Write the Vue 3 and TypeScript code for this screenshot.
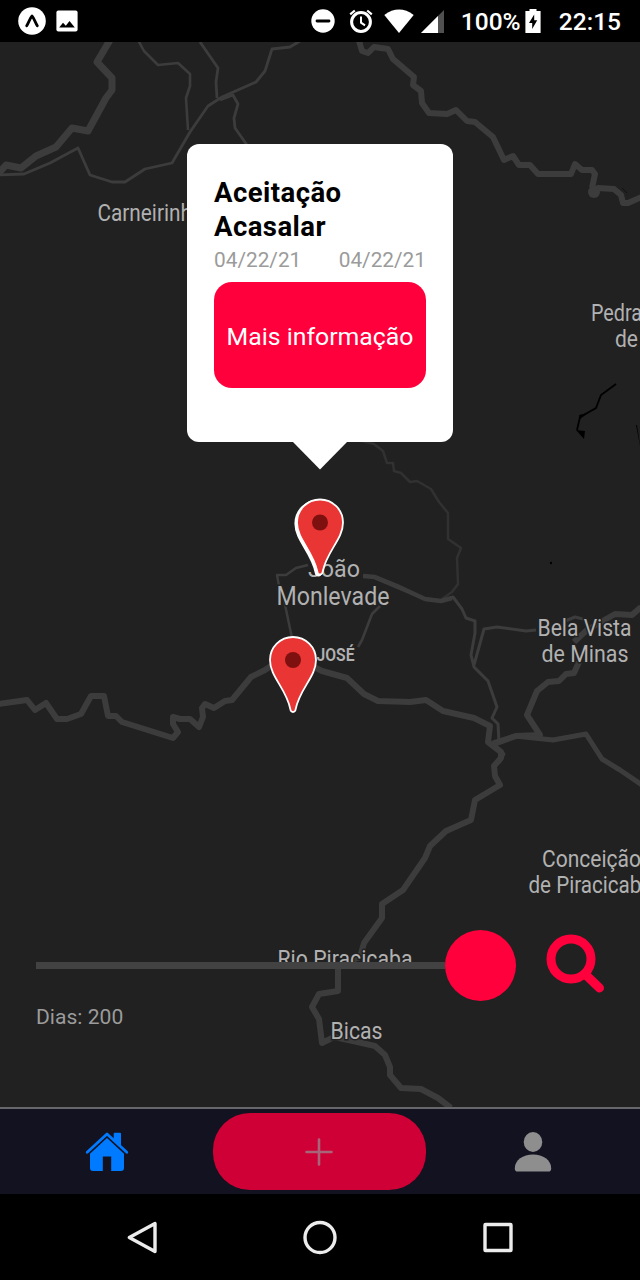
<script setup lang="ts">
interface Road { d: string; w: number; c?: string }
interface MapLabel { text: string; x: number; y: number; width?: number; size: number; weight?: number }
interface Pin { x: number; y: number; double: boolean }

const roads: Road[] = [
  { w: 7, d: 'M110 40 L97 62 L112 78 L112 90 L106 98 L88 131 L72 128 L56 147 L36 156 L21 168 L6 165 L-2 174' },
  { w: 2.8, d: 'M-2 175 L24 174 L50 163 L78 148 L90 175 L112 182 L125 182 L145 169 L172 163 L190 132 L208 106 L222 97 L256 82 L265 71 L272 49 L290 47 L300 41' },
  { w: 2.6, d: 'M138 40 L144 51 L158 65 L178 63 L190 74 L190 86 L186 98 L188 130' },
  { w: 2.8, d: 'M200 42 L218 68 L216 82 L217 98 M220 100 L233 95 L238 104 L234 118 L235 128 L247 145' },
  { w: 6, d: 'M359 41 L362 51 L368 53 L374 47 L388 49 L393 59 L414 77 L413 85 L421 91 L422 103 L429 113 L447 114 L456 110 L467 121 L475 122 L493 137 L504 160 L513 156 L519 165 L530 165 L538 174 L571 174 L575 164 L582 170 L592 170 L595 174 L592 188 M592 192 L598 188 L614 189 L621 195 L623 203 L628 203 L642 197' },
  { w: 2.5, c: '#303130', d: 'M350 438 L374 444 L383 451 L387 463 L393 463 L394 471 L401 473 L410 482 L417 481 L431 489 L439 502 L448 513 L448 539 L461 548 L457 558 L458 584 L452 592 L442 599' },
  { w: 2.5, d: 'M308 565 L296 568 L286 575 L277 575 L279 586 L284 600 L292 638' },
  { w: 2.6, d: 'M380 606 L372 614 L362 640 L358 647' },
  { w: 4.5, d: 'M363 576 L375 577 L397 586 L425 599 L441 601 L452 598' },
  { w: 3, d: 'M375 578 L425 599 M448 599 L453 597 L462 609 L466 618 L475 621 L475 633 L471 655 L474 667 L488 681 L497 707 L492 718 L498 724 L499 742 M474 665 L484 629 L497 627 L526 631 L536 630 M565 621 L575 617 L583 619' },
  { w: 6, d: 'M-2 704 L27 700 L35 710 L46 703 L57 719 L67 719 L81 714 L91 696 L104 696 L108 716 L116 716 L122 722 L173 738 L178 732 L173 724 L173 717 L180 719 L190 719 L199 727 L203 717 L202 708 L205 704 L214 708 L225 701 L232 700 L251 677 L265 670 L280 660' },
  { w: 6, d: 'M310 665 L322 671 L347 678 L364 694 L378 701 L410 702 L426 700 L443 711 L474 718 L490 726 L488 742 L501 752 L501 758 L494 766 L495 776 L500 785 L475 800 L471 820 L446 831 L430 846 L425 858 L403 890 L382 904 L382 918 L364 943 L360 957 L338 966 L338 991 L319 994 L312 1007 L319 1019 L322 1043 L334 1037 L353 1041 L375 1046 L385 1055 L390 1067 L390 1075 L401 1088 L421 1089 L438 1098 L451 1108' },
  { w: 6, d: 'M494 744 L516 736 L540 735 L527 715 L537 691 L548 682 L559 681 L566 674 L574 673 L579 662 M574 642 L587 630 L615 614 L632 615 L641 607' },
  { w: 5, d: 'M493 743 L515 736 L553 740 L586 734 L602 759 L620 770 L642 785' },
  { w: 3, d: 'M492 742 L504 754 L499 763' },
]

const labels: MapLabel[] = [
  { text: 'Carneirinhos', x: 97.5, y: 221, size: 24, width: 117 },
  { text: 'Pedra', x: 591, y: 321, size: 24, width: 51 },
  { text: 'de', x: 615, y: 347, size: 24, width: 23 },
  { text: 'João', x: 308, y: 577, size: 24, width: 52 },
  { text: 'Monlevade', x: 276.5, y: 605, size: 25, width: 113 },
  { text: 'JOSÉ', x: 316.5, y: 661, size: 18, width: 38, weight: 600 },
  { text: 'Bela Vista', x: 537.5, y: 636, size: 24, width: 94 },
  { text: 'de Minas', x: 541.5, y: 662, size: 24, width: 87 },
  { text: 'Conceição', x: 542, y: 867, size: 24, width: 99 },
  { text: 'de Piracicaba', x: 528.5, y: 893, size: 24, width: 124 },
  { text: 'Rio Piracicaba', x: 277.5, y: 967, size: 24, width: 135 },
  { text: 'Bicas', x: 330.5, y: 1039, size: 24, width: 52 },
]

const pins: Pin[] = [
  { x: 320, y: 522.5, double: true },
  { x: 293, y: 660, double: false },
]
const pinPath = 'M0 -23 A23 23 0 0 1 23 0 C23 17 7 28 2.7 49 C2.2 53 -2.2 53 -2.7 49 C-7 28 -23 17 -23 0 A23 23 0 0 1 0 -23 Z'
const dates = ['04/22/21', '04/22/21']
const dias = 200
</script>

<template>
  <main class="phone">
    <header class="status">
      <div class="notices">
        <svg width="28" height="28" viewBox="0 0 28 28"><circle cx="14" cy="14" r="13.8" fill="#fff" /><path d="M8.7 18.8 C10.5 16 12 11 14 9 C16 11 17.5 16 19.3 18.8" fill="none" stroke="#000" stroke-width="2.8" stroke-linecap="round" stroke-linejoin="round" /></svg>
        <svg width="22" height="22" viewBox="0 0 22 22"><rect x=".4" y=".4" width="21.2" height="21" rx="2" fill="#fff" /><path d="M3.2 17.6 L7 12.7 L9.8 15.8 L13.5 11 L18.8 17.6 Z" fill="#000" /></svg>
      </div>
      <div class="system">
        <svg class="dnd" width="24" height="24" viewBox="0 0 24 24"><circle cx="12" cy="12" r="11.7" fill="#fff" /><path d="M6 12 H18" stroke="#000" stroke-width="2.8" stroke-linecap="round" /></svg>
        <svg class="alarm" width="24" height="24" viewBox="0 0 24 24"><circle cx="12" cy="13" r="9.4" fill="none" stroke="#fff" stroke-width="3" /><path d="M12 7.5 V13.6 L16 16.3" fill="none" stroke="#fff" stroke-width="2" /><path d="M1.2 5.4 L5.8 1.5 M22.8 5.4 L18.2 1.5" stroke="#fff" stroke-width="2.2" /></svg>
        <svg class="wifi" width="30" height="24" viewBox="0 0 30 24"><path d="M.3 6 Q15 -4.8 29.7 6 L15 24 Z" fill="#fff" /></svg>
        <svg class="signal" width="23" height="23" viewBox="0 0 23 23"><path d="M23 0 V23 H0 Z" fill="#505050" /><path d="M17 6 V23 H0 Z" fill="#fff" /></svg>
        <span class="percent">100%</span>
        <svg class="battery" width="16" height="24" viewBox="0 0 16 24"><path d="M4.5 0 H11.5 V2 H15.6 V24 H.4 V2 H4.5 Z" fill="#fff" /><path d="M9.2 5.5 L4 14 H7.2 V20 L12.2 11.3 H9.2 Z" fill="#000" /></svg>
        <span>22:15</span>
      </div>
    </header>

    <section class="map">
      <svg class="canvas" viewBox="0 42 640 1065" width="640" height="1065">
        <path v-for="(road, i) in roads" :key="i" :d="road.d" :stroke-width="road.w" :stroke="road.c ?? '#3b3c3b'" fill="none" stroke-linejoin="round" />
        <circle cx="594" cy="192" r="6" fill="#3b3c3b" />
        <path d="M616 384 L601 395 L596 408 L580 417 L577 430" fill="none" stroke="#000" stroke-width="1.8" />
        <path d="M579 415 L588 413 L580 419 Z M576 430 L585 431 L584 439 Z M636 425 L637 425 L641 451 Z" fill="#000" />
        <circle cx="551" cy="563" r="1.2" fill="#000" />
        <path d="M622 188 l5 5" stroke="#111" stroke-width="1" />
        <text
          v-for="label in labels" :key="label.text" :x="label.x" :y="label.y" :font-size="label.size"
          :font-weight="label.weight ?? 400" :textLength="label.width" lengthAdjust="spacingAndGlyphs" class="place"
        >{{ label.text }}</text>
        <g v-for="pin in pins" :key="pin.y" :transform="`translate(${pin.x} ${pin.y})`">
          <path v-if="pin.double" :d="pinPath" transform="translate(-1.6 1)" fill="#fff" stroke="#fff" stroke-width="2" />
          <path :d="pinPath" fill="#ea3535" stroke="#fff" stroke-width="1.8" />
          <circle r="8" fill="#7f1010" />
        </g>
      </svg>

      <article class="callout">
        <h1>Aceitação<br>Acasalar</h1>
        <div class="dates"><span v-for="(date, i) in dates" :key="i">{{ date }}</span></div>
        <button class="more">Mais informação</button>
        <svg class="tip" width="56" height="29" viewBox="0 0 56 29"><path d="M0 0 H56 L28 28.5 Z" fill="#fff" /></svg>
      </article>

      <div class="filter">
        <div class="row">
          <div class="slider"><div class="track" /><div class="thumb" /></div>
          <svg class="search" width="60" height="60" viewBox="0 0 60 60" fill="none" stroke="#ff003d"><circle cx="26" cy="26" r="20" stroke-width="9" /><path d="M41 42 L54.5 55" stroke-width="9" stroke-linecap="round" /></svg>
        </div>
        <p>Dias: {{ dias }}</p>
      </div>
    </section>

    <nav class="tabs">
      <div class="tab">
        <svg width="44" height="42" viewBox="0 0 44 42"><path d="M2.2 21.2 L22 3 L41.8 21.2" fill="none" stroke="#007aff" stroke-width="2.8" stroke-linecap="round" stroke-linejoin="round" /><path d="M28.7 2.8 Q28.7 1.8 29.7 1.8 H35 Q36 1.8 36 2.8 V15 L28.7 8 Z M22 7 L39 22.8 V37 Q39 40 36 40 H26.2 V25.5 H17.8 V40 H8 Q5 40 5 37 V22.8 Z" fill="#007aff" /></svg>
      </div>
      <div class="tab">
        <button class="add" aria-label="Adicionar"><svg width="28" height="28" viewBox="0 0 28 28"><path d="M14 1.5 V26.5 M1.5 14 H26.5" stroke="#a8657a" stroke-width="2.6" stroke-linecap="round" /></svg></button>
      </div>
      <div class="tab">
        <svg width="38" height="42" viewBox="0 0 38 42" fill="#8e8e8f"><ellipse cx="19" cy="11" rx="9.3" ry="10" /><path d="M.8 37.5 C.8 29 9 23.6 19 23.6 C29 23.6 37.2 29 37.2 37.5 Q37.2 40.6 34.5 40.6 H3.5 Q.8 40.6 .8 37.5 Z" /></svg>
      </div>
    </nav>

    <footer class="keys">
      <svg width="36" height="36" viewBox="0 0 36 36"><path d="M31 3.5 V31.5 L5.3 17.5 Z" /></svg>
      <svg width="36" height="36" viewBox="0 0 36 36"><circle cx="18" cy="17.5" r="15" /></svg>
      <svg width="36" height="36" viewBox="0 0 36 36"><rect x="5" y="4.5" width="26" height="26" rx=".5" /></svg>
    </footer>
  </main>
</template>

<style>
body { margin: 0; background: #000; }
</style>

<style scoped>
.phone { width: 640px; height: 1280px; display: flex; flex-direction: column; overflow: hidden; background: #000; font-family: Roboto, "Liberation Sans", sans-serif; }
svg { display: block; flex: none; }
button { border: 0; padding: 0; font-family: inherit; }
.status { height: 42px; box-sizing: border-box; padding: 0 18px; display: flex; justify-content: space-between; align-items: center; color: #fff; font-size: 24.5px; font-weight: 500; line-height: 44px; }
.notices, .system { display: flex; align-items: center; }
.notices { gap: 10px; }
.system { white-space: nowrap; margin-right: 1px; }
.status span { height: 42px; }
.alarm { margin-left: 14px; }
.wifi { margin-left: 11px; }
.signal { margin-left: 7px; }
.percent { margin-left: 17px; width: 59px; }
.battery { margin: 0 18px 0 5px; }
.map { position: relative; flex: 1; background: #212121; overflow: hidden; }
.place { fill: #b1b1b1; stroke: #212121; stroke-width: 3px; paint-order: stroke; }
.callout { position: absolute; left: 187px; top: 102px; width: 266px; height: 298px; box-sizing: border-box; padding: 31px 27px 0; background: #fff; border-radius: 12px; }
.tip { position: absolute; left: 105px; top: 297px; }
h1 { margin: 0; padding-top: 1px; font-size: 27.5px; letter-spacing: 0.45px; line-height: 34px; font-weight: 700; color: #000; }
.dates { display: flex; justify-content: space-between; color: #9b9b9b; font-size: 20.8px; line-height: 32px; height: 38px; }
.more { display: block; width: 212px; height: 106px; padding-top: 2px; border-radius: 18px; background: #ff003d; color: #fff; font-size: 24.8px; white-space: nowrap; }
.filter { position: absolute; left: 36px; right: 35px; top: 885px; }
.row { display: flex; justify-content: space-between; align-items: center; height: 76px; }
.slider { width: 479.5px; height: 71px; display: flex; align-items: center; }
.search { margin-bottom: 4px; }
.track { flex: 1; height: 7px; background: #424242; }
.thumb { width: 71px; height: 71px; border-radius: 50%; background: #ff003d; }
.filter p { margin: 0; padding-top: 2px; color: #9b9b9b; font-size: 21.1px; line-height: 24px; }
.tabs { height: 85px; border-top: 2px solid #66666b; background: #131220; display: grid; grid-template-columns: repeat(3, 1fr); }
.tab { display: flex; align-items: center; justify-content: center; }
.add { width: 213px; height: 77px; border-radius: 37px; background: #cf0036; display: flex; align-items: center; justify-content: center; padding-right: 2px; }
.keys { height: 86px; padding-top: 1px; box-sizing: border-box; display: flex; justify-content: center; align-items: center; gap: 142px; }
.keys path, .keys circle, .keys rect { fill: none; stroke: #ececec; stroke-width: 3.4; stroke-linejoin: round; }
</style>
